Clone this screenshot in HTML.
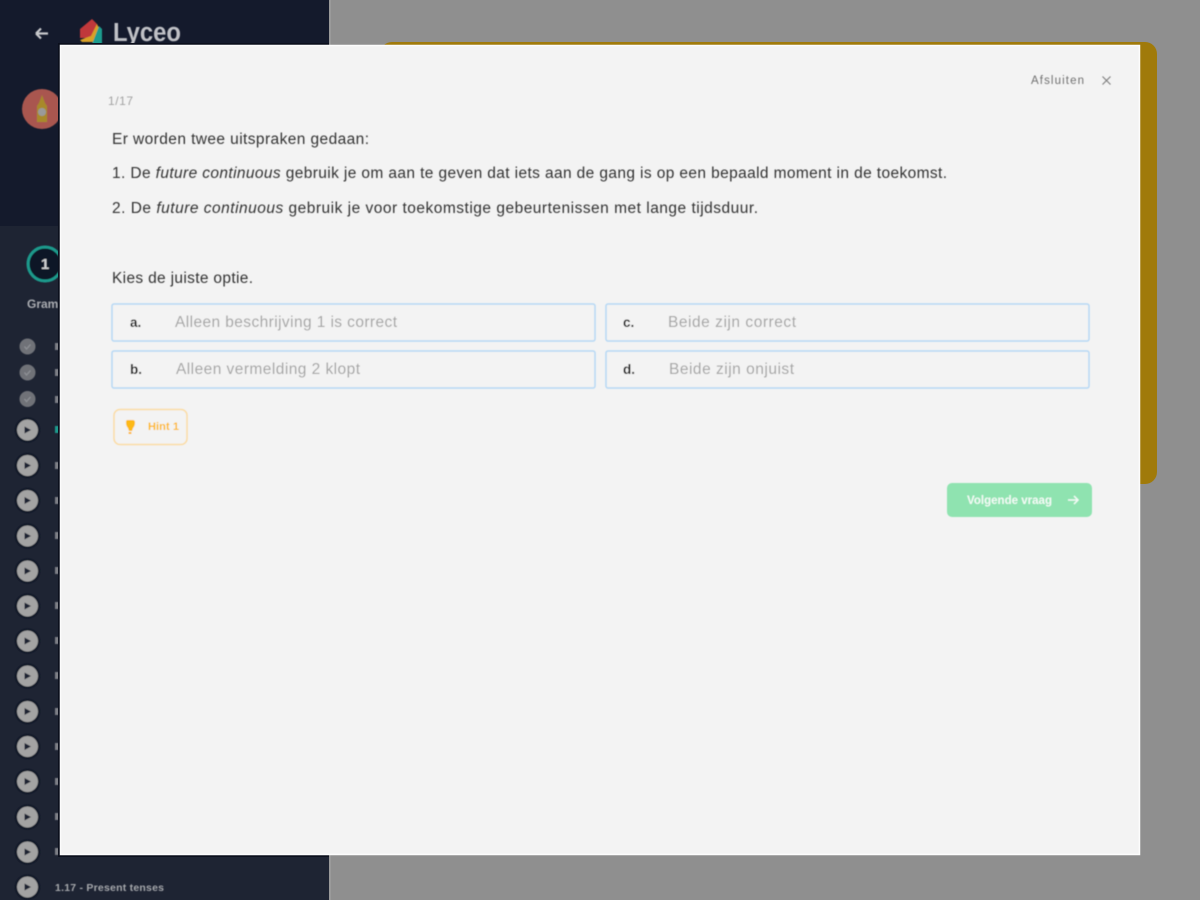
<!DOCTYPE html>
<html><head><meta charset="utf-8"><title>Lyceo</title>
<style>
html,body{margin:0;padding:0;width:1200px;height:900px;overflow:hidden;background:#8f8f8f}
svg{display:block;position:absolute;left:0;top:0}
text{font-family:"Liberation Sans",sans-serif}
</style></head><body>
<svg width="1200" height="900" viewBox="0 0 1200 900" xmlns="http://www.w3.org/2000/svg">
<defs>
<g id="p"><circle r="12.5" fill="#0f1526"/><circle r="10.5" fill="#a3a3a3"/><path d="M-3 -3.500 L3.500 0 L-3 3.500Z" fill="#1e2433"/></g>
<g id="c"><circle r="8" fill="#6f7278"/><path d="M-3 0 L-1 2.500 L3 -2" fill="none" stroke="#8f9196" stroke-width="1.300"/></g>
<filter id="b" x="-5%" y="-5%" width="110%" height="110%"><feGaussianBlur stdDeviation="0.5"/></filter>
</defs>
<rect width="1200" height="900" fill="#8f8f8f"/>
<rect x="0" y="0" width="329" height="226" fill="#141a2c"/>
<rect x="0" y="226" width="329" height="674" fill="#1e2433"/>
<rect x="329" y="0" width="2" height="900" fill="#9a9a9a"/>
<rect x="380" y="42" width="777" height="442" rx="12" fill="#a07a0a"/>
<g filter="url(#b)">
<path d="M36 33.500H48M36 33.500L41 28.500M36 33.500L41 38.500" fill="none" stroke="#c8c9cc" stroke-width="2.200"/>
<path d="M80 29L92 19L97 24V38H80Z" fill="#c0383a"/>
<path d="M80 40L91 36L97 24L99 28V42H82Z" fill="#d9a128"/>
<path d="M92 44L99 26L102 29V45Z" fill="#1f9c8e"/>
<text x="113" y="41" font-size="25.500" font-weight="bold" fill="#c0c1c6" textLength="68" lengthAdjust="spacingAndGlyphs">Lyceo</text>
<circle cx="42" cy="109" r="20" fill="#a9574f"/>
<path d="M42 95L45 103L47 106V122H37V106L39 103Z" fill="#a8892c"/>
<circle cx="42" cy="112" r="4" fill="#9a9a9a"/>
<circle cx="45" cy="264" r="17" fill="#0f1526" stroke="#1c9a8c" stroke-width="3"/>
<text x="45" y="269" font-size="15" font-weight="bold" fill="#cfd0d2" text-anchor="middle">1</text>
<text x="27" y="308" font-size="12" font-weight="bold" fill="#a9abb0">Gram</text>
<use href="#c" x="27.500" y="346.500"/><use href="#c" x="27.500" y="372.500"/><use href="#c" x="27.500" y="399"/>
<use href="#p" x="27.500" y="430"/><use href="#p" x="27.500" y="465.500"/><use href="#p" x="27.500" y="500.500"/>
<use href="#p" x="27.500" y="536"/><use href="#p" x="27.500" y="571"/><use href="#p" x="27.500" y="606"/>
<use href="#p" x="27.500" y="641"/><use href="#p" x="27.500" y="676"/><use href="#p" x="27.500" y="711.500"/>
<use href="#p" x="27.500" y="746.500"/><use href="#p" x="27.500" y="781.500"/><use href="#p" x="27.500" y="817"/>
<use href="#p" x="27.500" y="852"/><use href="#p" x="27.500" y="887"/>
<g fill="#7d7f86"><rect x="55" y="343" width="5" height="7"/><rect x="55" y="369" width="5" height="7"/><rect x="55" y="396" width="5" height="7"/>
<rect x="55" y="426" width="5" height="7" fill="#1c9a8c"/><rect x="55" y="462" width="5" height="7"/><rect x="55" y="497" width="5" height="7"/><rect x="55" y="532" width="5" height="7"/><rect x="55" y="567" width="5" height="7"/><rect x="55" y="602" width="5" height="7"/><rect x="55" y="637" width="5" height="7"/><rect x="55" y="672" width="5" height="7"/><rect x="55" y="708" width="5" height="7"/><rect x="55" y="743" width="5" height="7"/><rect x="55" y="778" width="5" height="7"/><rect x="55" y="813" width="5" height="7"/><rect x="55" y="848" width="5" height="7"/></g>
<text x="55" y="891" font-size="10.500" font-weight="bold" fill="#a5a7ab" textLength="109" lengthAdjust="spacing">1.17 - Present tenses</text>
</g>
<rect x="58" y="43" width="2" height="814" fill="#0b0f1c"/>
<rect x="58" y="43" width="271" height="2" fill="#0b0f1c"/>
<rect x="58" y="855" width="271" height="2" fill="#0b0f1c"/>
<rect x="60" y="45" width="1080" height="810" fill="#f3f3f3"/>
<rect x="60.500" y="45.500" width="1079" height="809" fill="none" stroke="#fcfcfc" stroke-width="1.500"/>
<g filter="url(#b)">
<text x="108" y="105" font-size="12" fill="#a2a2a2" textLength="25" lengthAdjust="spacing">1/17</text>
<text x="1031" y="84" font-size="11.500" fill="#6f6f6f" textLength="53" lengthAdjust="spacing">Afsluiten</text>
<path d="M1102.500 76.500L1110.500 84.500M1110.500 76.500L1102.500 84.500" stroke="#808080" stroke-width="1.200" fill="none"/>
<text x="112" y="144" font-size="15.500" fill="#333" textLength="257" lengthAdjust="spacing">Er worden twee uitspraken gedaan:</text>
<text x="112" y="178" font-size="15.500" fill="#333" textLength="835" lengthAdjust="spacing">1. De <tspan font-style="italic">future continuous</tspan> gebruik je om aan te geven dat iets aan de gang is op een bepaald moment in de toekomst.</text>
<text x="112" y="213" font-size="15.500" fill="#333" textLength="646" lengthAdjust="spacing">2. De <tspan font-style="italic">future continuous</tspan> gebruik je voor toekomstige gebeurtenissen met lange tijdsduur.</text>
<text x="112" y="283" font-size="15.500" fill="#333" textLength="141" lengthAdjust="spacing">Kies de juiste optie.</text>
<g fill="#f3f3f3" stroke="#b5d8f5" stroke-width="1.500">
<rect x="112" y="304" width="483" height="37" rx="2"/><rect x="606" y="304" width="483" height="37" rx="2"/>
<rect x="112" y="351" width="483" height="37" rx="2"/><rect x="606" y="351" width="483" height="37" rx="2"/>
</g>
<g font-size="13.500" font-weight="bold" fill="#111">
<text x="130" y="327">a.</text><text x="130" y="374">b.</text><text x="623" y="327">c.</text><text x="623" y="374">d.</text>
</g>
<g font-size="15.500" fill="#a4a4a4">
<text x="175" y="327" textLength="222" lengthAdjust="spacing">Alleen beschrijving 1 is correct</text>
<text x="176" y="374" textLength="184" lengthAdjust="spacing">Alleen vermelding 2 klopt</text>
<text x="668" y="327" textLength="128" lengthAdjust="spacing">Beide zijn correct</text>
<text x="669" y="374" textLength="125" lengthAdjust="spacing">Beide zijn onjuist</text>
</g>
<rect x="114" y="409.500" width="73" height="35" rx="6" fill="#f3f3f3" stroke="#fbdca4" stroke-width="1.500"/>
<path d="M127.500 420h5q2.500 0 2.500 2.500q0 3.500-2 5.500l-1 3h-3l-1-3q-2-2-2-5.500q0-2.500 1.500-2.500Z" fill="#fdb913"/>
<rect x="128.500" y="432" width="3" height="2" fill="#fdb913"/>
<text x="148" y="430" font-size="11" font-weight="bold" fill="#fdb913" textLength="31" lengthAdjust="spacing">Hint 1</text>
<rect x="947" y="483" width="145" height="34" rx="5" fill="#8fe3b0"/>
<text x="967" y="504" font-size="11.500" font-weight="bold" fill="#f3fbf6" textLength="85" lengthAdjust="spacing">Volgende vraag</text>
<path d="M1068 500H1078M1074 496L1078 500L1074 504" fill="none" stroke="#f3fbf6" stroke-width="1.500"/>
</g>
</svg>
</body></html>
